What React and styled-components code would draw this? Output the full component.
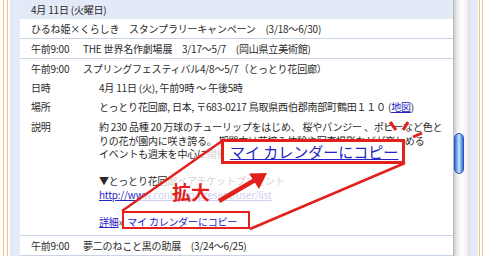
import React from 'react'
import styled, { createGlobalStyle } from 'styled-components'

const GlobalStyle = createGlobalStyle`
    html, body {
        margin: 0;
        padding: 0;
        background: #fff;
    }
`;

const RED = '#e2211c';
const LINK = '#2424c8';

const Screen = styled.div`
    position: relative;
    display: flex;
    width: 500px;
    height: 256px;
    overflow: hidden;
    background: #fff;
    font-family: "Noto Sans CJK JP", "Noto Sans", sans-serif;
    font-size: 10px;
    color: #2a2a2a;
`;

const Frame = styled.div`
    flex: none;
    width: ${props => props.$w}px;
    padding-left: ${props => props.$inset}px;
    box-sizing: border-box;
    display: flex;
`;

const FrameLines = styled.div`
    width: ${props => props.$gap}px;
    border-left: 1px solid #e7c583;
    border-right: 1px solid #e7c583;
`;

const Gutter = styled.div`
    flex: none;
    width: ${props => props.$w}px;
    background: #e4eaf8;
`;

const Agenda = styled.div`
    flex: none;
    width: 433px;
    display: flex;
    flex-direction: column;
    overflow: hidden;
    white-space: nowrap;
    letter-spacing: -0.2px;
`;

const DayHeader = styled.div`
    height: 19px;
    line-height: 19px;
    padding-left: 11px;
    background: #e3e9f6;
`;

const EventRow = styled.div`
    border-bottom: 1px solid #c8d4e4;
    padding-left: 11px;
`;

const EventLine = styled.div`
    display: flex;
    height: 19px;
    line-height: 19px;
`;

const Time = styled.span`
    flex: none;
    width: 52px;
`;

const Details = styled.div`
    display: flex;
    flex-direction: column;
    padding-bottom: 7px;
`;

const DetailRow = styled.div`
    display: flex;
    line-height: ${props => props.$lh || 19}px;
    padding-top: ${props => props.$top || 0}px;
`;

const Label = styled.span`
    flex: none;
    width: 68px;
`;

const Value = styled.div`
    display: flex;
    flex-direction: column;
`;

const Blank = styled.div`
    height: 13.5px;
`;

const Link = styled.a`
    color: ${LINK};
    text-decoration: underline;
`;

const Scrollbar = styled.div`
    flex: none;
    width: 17px;
    padding-top: 133px;
    box-sizing: border-box;
    background: linear-gradient(to right, #b4b4b4 0, #d8d8d8 2px, #f2f2f2 5px, #fff 9px, #f3f3f3 13px, #e0e0e0 17px);
`;

const Thumb = styled.div`
    width: 10px;
    height: 41px;
    margin-left: 1px;
    box-sizing: border-box;
    border: 1px solid #2b57b4;
    border-radius: 5px;
    background: linear-gradient(to right, #3a6cd0, #86b5f4 30%, #d2e6fd 50%, #86b5f4 70%, #3a6cd0);
`;

const Callout = styled.svg`
    position: absolute;
    left: 0;
    top: 0;
    pointer-events: none;
`;

const ZoomBox = styled.div`
    position: absolute;
    left: 221px;
    top: 139px;
    width: 184px;
    height: 25px;
    box-sizing: border-box;
    border: 3px solid ${RED};
    background: #fff;
    display: flex;
    align-items: center;
    padding-left: 6px;
    font-size: 15px;
    line-height: 1;
    white-space: nowrap;
`;

const ZoomLabel = styled.span`
    position: absolute;
    left: 172px;
    top: 182px;
    font-size: 19px;
    font-weight: 700;
    line-height: 1;
    color: ${RED};
`;

const App = () => (
    <Screen>
        <GlobalStyle />
        <Frame $w={10} $inset={3}><FrameLines $gap={3} /></Frame>
        <Gutter $w={10} />
        <Agenda>
            <DayHeader>4月 11日 (火曜日)</DayHeader>
            <EventRow>
                <EventLine>ひるね姫×くらしき　スタンプラリーキャンペーン　(3/18～6/30)</EventLine>
            </EventRow>
            <EventRow>
                <EventLine><Time>午前9:00</Time>THE 世界名作劇場展　3/17～5/7　(岡山県立美術館)</EventLine>
            </EventRow>
            <EventRow>
                <EventLine><Time>午前9:00</Time>スプリングフェスティバル4/8～5/7（とっとり花回廊）</EventLine>
                <Details>
                    <DetailRow><Label>日時</Label>4月 11日 (火), 午前9時 ～ 午後5時</DetailRow>
                    <DetailRow>
                        <Label>場所</Label>
                        <span>とっとり花回廊, 日本, 〒683-0217 鳥取県西伯郡南部町鶴田１１０ (<Link>地図</Link>)</span>
                    </DetailRow>
                    <DetailRow $lh={13.5} $top={4}>
                        <Label>説明</Label>
                        <Value>
                            <span>約 230 品種 20 万球のチューリップをはじめ、 桜やパンジー 、ポピーなど色と</span>
                            <span>りの花が園内に咲き誇る。 期間中は花摘み体験や写真撮影などが楽しめる</span>
                            <span>イベントも週末を中心に開催。</span>
                            <Blank />
                            <span>▼とっとり花回廊ペアチケットプレゼント</span>
                            <Link>http://www.conbiz.jp/present/user/list</Link>
                            <Blank />
                            <span><Link>詳細</Link>»&nbsp;&nbsp;<Link>マイ カレンダーにコピー</Link></span>
                        </Value>
                    </DetailRow>
                </Details>
            </EventRow>
            <EventRow>
                <EventLine><Time>午前9:00</Time>夢二のねこと黒の助展　(3/24～6/25)</EventLine>
            </EventRow>
        </Agenda>
        <Scrollbar><Thumb /></Scrollbar>
        <Gutter $w={8} />
        <Frame $w={22} $inset={1}><FrameLines $gap={2} /></Frame>

        <Callout width="500" height="256" viewBox="0 0 500 256">
            <polygon points="122,211 221,141 405,141 405,164 250,229 250,211" fill="#fff" fillOpacity="0.78" />
            <line x1="122" y1="211" x2="222" y2="141" stroke={RED} strokeWidth="2.5" />
            <line x1="250" y1="229" x2="405" y2="163" stroke={RED} strokeWidth="2.5" />
            <rect x="123" y="212" width="126" height="16" fill="none" stroke={RED} strokeWidth="2" />
            <line x1="390" y1="122" x2="396" y2="130" stroke={RED} strokeWidth="3" />
            <line x1="408" y1="122" x2="403" y2="130" stroke={RED} strokeWidth="3" />
            <line x1="413" y1="137" x2="422" y2="133" stroke={RED} strokeWidth="3" />
            <line x1="219" y1="201" x2="255" y2="180" stroke={RED} strokeWidth="4.5" />
            <polygon points="267,173 249,173.5 259,189" fill={RED} />
        </Callout>
        <ZoomBox><Link>マイ カレンダーにコピー</Link></ZoomBox>
        <ZoomLabel>拡大</ZoomLabel>
    </Screen>
)

export default App
